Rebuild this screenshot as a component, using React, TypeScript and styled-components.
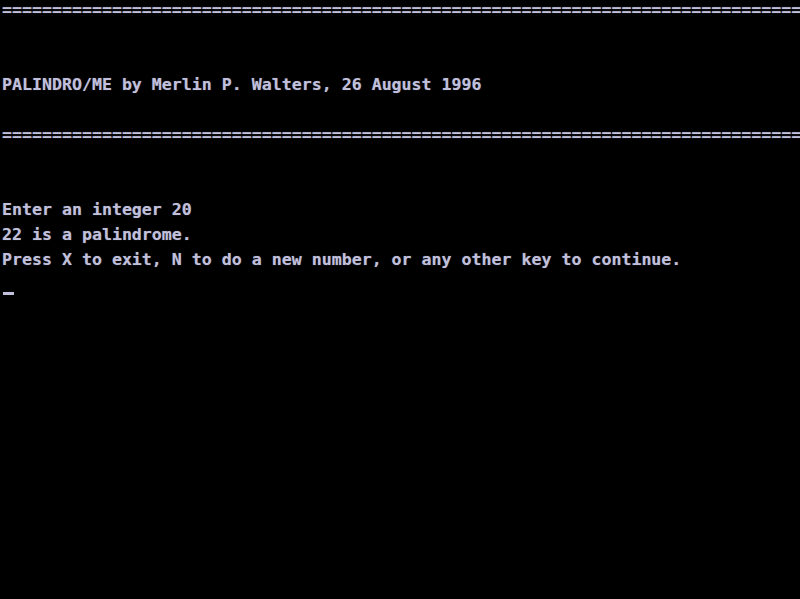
import React from "react";
import styled, { createGlobalStyle } from "styled-components";

const GlobalStyle = createGlobalStyle`
  html, body {
    margin: 0;
    padding: 0;
    background: #000;
  }
  #root {
    width: 800px;
    height: 599px;
  }
`;

const Screen = styled.div`
  width: 800px;
  height: 599px;
  background: #000;
  overflow: hidden;
  display: flex;
  flex-direction: column;
  padding-left: 2px;
  box-sizing: border-box;
`;

const Row = styled.div`
  height: 25px;
  flex: 0 0 25px;
  font-family: "DejaVu Sans Mono", "Liberation Mono", monospace;
  font-size: 16.6px;
  font-weight: bold;
  line-height: 19px;
  letter-spacing: 0;
  color: #c0c0dc;
  white-space: pre;
  text-shadow: 0 0 1px rgba(192, 192, 220, 0.5);
`;

const Cursor = styled.span`
  display: inline-block;
  width: 11px;
  height: 3px;
  margin-top: 17px;
  margin-left: 1px;
  background: #c0c0dc;
`;

const rule = "=".repeat(80);

const lines: string[] = [
  rule,
  "",
  "",
  "PALINDRO/ME by Merlin P. Walters, 26 August 1996",
  "",
  rule,
  "",
  "",
  "Enter an integer 20",
  "22 is a palindrome.",
  "Press X to exit, N to do a new number, or any other key to continue.",
];

export default function App() {
  return (
    <>
      <GlobalStyle />
      <Screen>
        {lines.map((l, i) => (
          <Row key={i}>{l}</Row>
        ))}
        <Row>
          <Cursor />
        </Row>
      </Screen>
    </>
  );
}
